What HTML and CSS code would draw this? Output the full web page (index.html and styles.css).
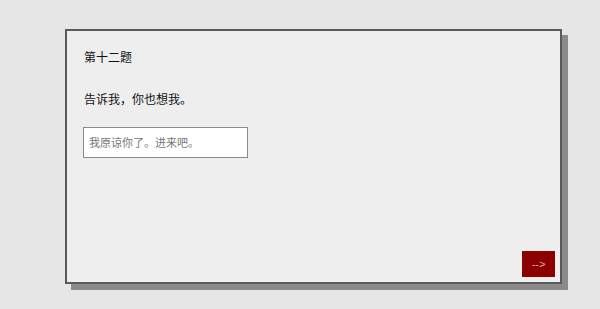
FILE: index.html
```html
<!DOCTYPE html>
<html lang="zh">
<head>
<meta charset="utf-8">
<link rel="stylesheet" href="styles.css">
</head>
<body>
<div class="card">
  <div class="title">第十二题</div>
  <div class="question">告诉我，你也想我。</div>
  <input class="answer" type="text" placeholder="我原谅你了。进来吧。">
  <button class="next">--&gt;</button>
</div>
</body>
</html>
```
FILE: styles.css
```css
html, body {
  margin: 0;
  padding: 0;
  background: #e6e6e6;
  font-family: "Liberation Serif", "Noto Sans CJK SC", serif;
}
body {
  box-sizing: border-box;
  min-height: 309px;
  padding: 29px 0 0 65px;
}
.card {
  box-sizing: border-box;
  width: 497px;
  height: 255px;
  background: #eeeeee;
  border: 2px solid #5a5a5a;
  box-shadow: 6px 6px 0 #8a8a8a;
  padding: 17px 5px 5px 16px;
  display: flex;
  flex-direction: column;
  align-items: flex-start;
}
.title {
  font-size: 12px;
  line-height: 20px;
  color: #111;
  padding-left: 1px;
}
.question {
  margin-top: 22px;
  font-size: 12px;
  line-height: 20px;
  color: #111;
  padding-left: 1px;
}
.answer {
  margin-top: 17px;
  box-sizing: border-box;
  width: 165px;
  height: 31px;
  border: 1px solid #8a8a8a;
  background: #fff;
  padding: 0 5px;
  font-family: "Liberation Serif", "Noto Sans CJK SC", serif;
  font-size: 11px;
  outline: none;
}
.answer::placeholder {
  color: #777;
}
.next {
  margin-top: auto;
  align-self: flex-end;
  width: 33px;
  height: 26px;
  border: none;
  background: #8b0000;
  color: #f0a0a0;
  font-family: "Liberation Sans", sans-serif;
  font-size: 11px;
  padding: 0;
}
```
